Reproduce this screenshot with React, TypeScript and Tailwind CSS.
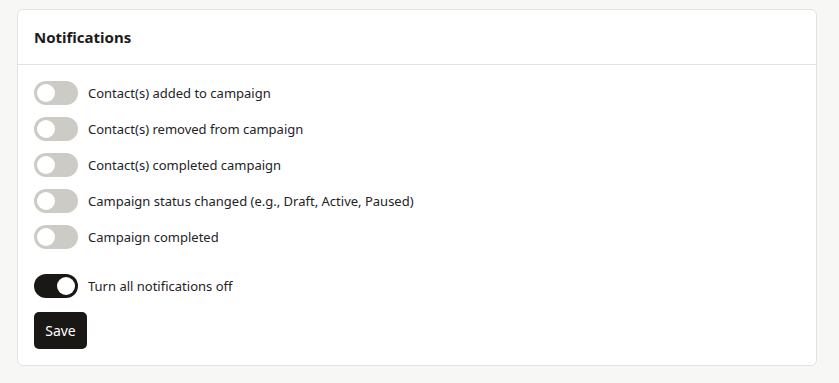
import React, { useState } from "react";

const items = [
  "Contact(s) added to campaign",
  "Contact(s) removed from campaign",
  "Contact(s) completed campaign",
  "Campaign status changed (e.g., Draft, Active, Paused)",
  "Campaign completed",
];

function Toggle({ on }: { on: boolean }) {
  return (
    <div
      className={
        "relative h-[24px] w-[44px] shrink-0 rounded-full " +
        (on ? "bg-[#1a1814]" : "bg-[#cccbc6]")
      }
    >
      <div
        className={
          "absolute top-[3px] h-[18px] w-[18px] rounded-full bg-white " +
          (on ? "left-[23px]" : "left-[3px]")
        }
      />
    </div>
  );
}

export default function App() {
  const [all] = useState(true);
  return (
    <div
      className="min-h-[383px] bg-[#f7f7f5] px-[17px] pt-[9px] pb-[18px]"
      style={{ fontFamily: '"Segoe UI", "Noto Sans", "Open Sans", sans-serif' }}
    >
      <div className="w-[800px] rounded-[6px] border border-[#e3e2df] bg-white">
        <div className="flex h-[55px] items-center border-b border-[#e3e2df] px-[16px]">
          <h2 className="text-[15px] font-bold text-[#1c1b19]">Notifications</h2>
        </div>
        <div className="flex flex-col px-[16px] pt-[16px] pb-[16px]">
          <div className="flex flex-col gap-[12px]">
            {items.map((t) => (
              <div key={t} className="flex h-[24px] items-center gap-[10px]">
                <Toggle on={false} />
                <span className="text-[13px] leading-[18px] text-[#24231f]">{t}</span>
              </div>
            ))}
          </div>
          <div className="mt-[25px] flex h-[24px] items-center gap-[10px]">
            <Toggle on={all} />
            <span className="text-[13px] leading-[18px] text-[#24231f]">Turn all notifications off</span>
          </div>
          <div className="mt-[14px] flex">
            <button className="h-[37px] w-[53px] rounded-[5px] bg-[#1a1814] text-[14px] leading-[18px] text-white">
              Save
            </button>
          </div>
        </div>
      </div>
    </div>
  );
}
